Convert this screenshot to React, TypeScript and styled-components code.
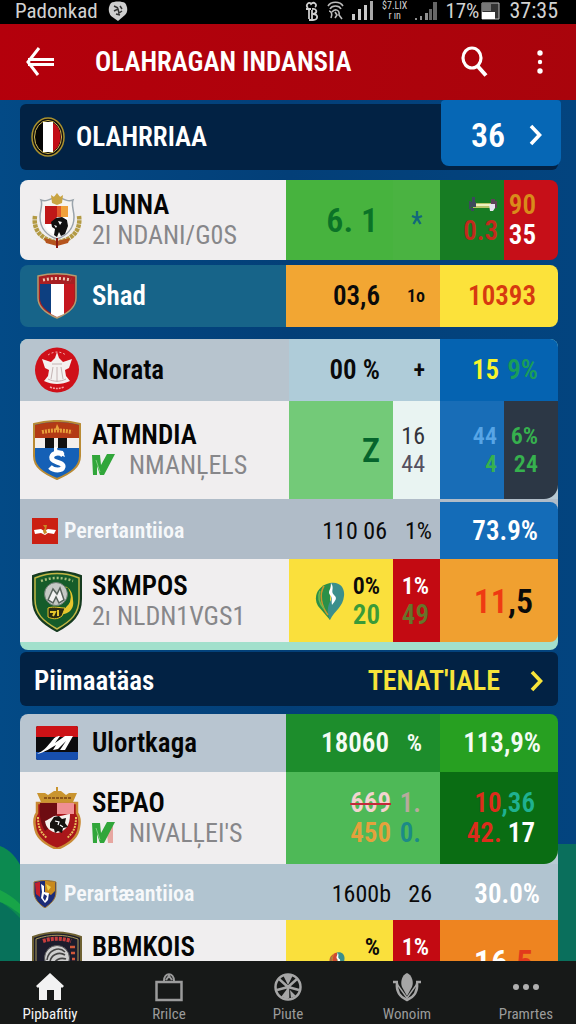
import React from 'react';
import styled, { createGlobalStyle, css } from 'styled-components';

const GlobalStyle = createGlobalStyle`
  *, *::before, *::after { box-sizing: border-box; }
  body {
    margin: 0;
    background: #03447f;
    font-family: 'Roboto Condensed', 'Liberation Sans Narrow', Roboto, 'Liberation Sans', sans-serif;
  }
  button { font: inherit; color: inherit; background: none; border: 0; padding: 0; cursor: pointer; }
  a { color: inherit; text-decoration: none; }
`;

const Shell = styled.div`
  position: relative;
  display: flex;
  flex-direction: column;
  height: 100vh;
  overflow: hidden;
  background: linear-gradient(90deg, #034a86, #033f78 50%, #03447f);
`;

const Backdrop = styled.svg`
  position: absolute;
  left: 0;
  bottom: 0;
  width: 100%;
  height: 184px;
`;

const StatusBar = styled.div`
  position: relative;
  flex: none;
  display: flex;
  align-items: center;
  justify-content: space-between;
  height: 24px;
  padding: 0 18px 2px 15px;
  background: #000;
  color: #d2d2d2;
  font-size: 21px;
  line-height: 22px;
`;

const StatusGroup = styled.div<{ $gap: number }>`
  display: flex;
  align-items: center;
  gap: ${(p) => p.$gap}px;
`;

const Clock = styled.span`
  font-size: 22px;
`;

const Carrier = styled.span`
  font-size: 10px;
  line-height: 10px;
  text-align: center;
`;

const AppBar = styled.header`
  position: relative;
  flex: none;
  display: flex;
  align-items: center;
  height: 76px;
  padding: 0 20px 0 24px;
  background: linear-gradient(100deg, #b4000c, #a9040c);
  color: #fff;
`;

const IconButton = styled.button`
  display: flex;
  align-items: center;
  justify-content: center;
  width: 32px;
  height: 40px;
`;

const Title = styled.h1`
  flex: 1;
  margin: 0 0 0 39px;
  font-size: 27px;
  line-height: 32px;
  font-weight: 600;
`;

const Actions = styled.div`
  display: flex;
  gap: 34px;
`;

const Content = styled.main`
  position: relative;
  flex: 1;
  min-height: 0;
  overflow-y: auto;
  scrollbar-width: none;
  padding: 0 18px 0 20px;
`;

const SectionBar = styled.section<{ $tall?: boolean }>`
  display: flex;
  align-items: center;
  justify-content: space-between;
  border-radius: 6px;
  background: #022244;
  color: #fff;
  ${(p) =>
    p.$tall
      ? css`
          height: 66px;
          margin-top: 4px;
          padding-left: 11px;
        `
      : css`
          height: 54px;
          margin: 2px 0 8px;
          padding: 4px 14px 0;
        `}
`;

const SectionTitle = styled.h2`
  display: flex;
  align-items: center;
  gap: 11px;
  margin: 0;
  font-size: 27px;
  line-height: 32px;
  font-weight: 600;
`;

const CountButton = styled.button`
  align-self: flex-start;
  display: flex;
  align-items: center;
  justify-content: space-between;
  width: 120px;
  height: 66px;
  margin: -4px -3px 0 0;
  padding: 4px 18px 0 30px;
  border-radius: 4px 4px 8px 8px;
  background: #0667b5;
  font-size: 34px;
  font-weight: 600;
`;

const MoreLink = styled.a`
  display: flex;
  align-items: center;
  gap: 30px;
  color: #f7e33a;
  font-size: 28px;
  line-height: 32px;
  font-weight: 600;
`;

const Table = styled.table<{ $top?: number; $foot?: string }>`
  display: block;
  margin-top: ${(p) => p.$top ?? 0}px;
  overflow: hidden;
  border-radius: 8px;
  background: ${(p) => p.$foot ?? 'transparent'};
  padding-bottom: ${(p) => (p.$foot ? 8 : 0)}px;
`;

const Body = styled.tbody`
  display: block;
`;

const Row = styled.tr<{ $h: number; $mid?: number; $inset?: boolean; $bg?: string }>`
  display: grid;
  grid-template-columns: minmax(0, 1fr) ${(p) => p.$mid ?? 107}px 47px 64px 54px;
  min-height: ${(p) => p.$h}px;
  padding-top: ${(p) => (p.$inset ? 3 : 0)}px;
  background: ${(p) => p.$bg ?? 'transparent'};
`;

const NameCell = styled.th<{ $bg: string; $small?: boolean }>`
  display: flex;
  align-items: center;
  gap: ${(p) => (p.$small ? 6 : 10)}px;
  padding: 0 0 0 12px;
  background: ${(p) => p.$bg};
  text-align: left;
  font-weight: 400;
`;

const Emblem = styled.span<{ $small?: boolean }>`
  display: flex;
  flex: none;
  justify-content: center;
  width: ${(p) => (p.$small ? 26 : 50)}px;
`;

const Name = styled.span<{ $color?: string; $size?: number }>`
  display: block;
  color: ${(p) => p.$color ?? '#050505'};
  font-size: ${(p) => p.$size ?? 27}px;
  line-height: 30px;
  font-weight: 600;
  white-space: nowrap;
`;

const Sub = styled.span`
  display: flex;
  align-items: center;
  gap: 14px;
  color: #87878a;
  font-size: 26px;
  line-height: 30px;
  white-space: nowrap;
`;

const Cell = styled.td<{ $bg: string; $pad?: number; $round?: string }>`
  display: flex;
  flex-direction: column;
  align-items: flex-end;
  justify-content: center;
  padding: 0 ${(p) => p.$pad ?? 13}px 0 0;
  background: ${(p) => p.$bg};
  border-radius: ${(p) => p.$round ?? '0'};
`;

const WideCell = styled(Cell)`
  grid-column: span 2;
`;

const Figure = styled.span<{ $color?: string; $size?: number; $light?: boolean }>`
  color: ${(p) => p.$color ?? '#0a0a0a'};
  font-size: ${(p) => p.$size ?? 27}px;
  line-height: ${(p) => (p.$size === 24 ? 28 : 30)}px;
  font-weight: ${(p) => (p.$light ? 400 : 600)};
  white-space: pre;
`;

const Struck = styled.s`
  text-decoration-color: #c22a3a;
  text-decoration-thickness: 2px;
`;

const Line = styled.span`
  display: flex;
  align-items: center;
  gap: 8px;
`;

const CellBody = styled.span`
  display: flex;
  align-items: center;
  gap: 8px;
`;

const Stack = styled.span`
  display: flex;
  flex-direction: column;
  align-items: flex-end;
`;

const BottomNav = styled.nav`
  position: relative;
  flex: none;
  display: flex;
  justify-content: space-between;
  height: 63px;
  padding: 11px 23px 0;
  background: #171918;
`;

const NavItem = styled.a<{ $active?: boolean }>`
  display: flex;
  flex-direction: column;
  align-items: center;
  gap: 2px;
  width: 54px;
  color: ${(p) => (p.$active ? '#f4f4f4' : '#9b9b9b')};
  font-size: 15px;
  line-height: 20px;
`;

/* ---------- icons ---------- */

const BackIcon = () => (
  <svg width="30" height="32" viewBox="0 0 30 32" fill="none" stroke="#fff" strokeWidth="3">
    <path d="M14 2 3 16l10 13M3 13.500h26M3 18.500h26" />
  </svg>
);

const SearchIcon = () => (
  <svg width="28" height="32" viewBox="0 0 28 32" fill="none" stroke="#fff" strokeWidth="3.200">
    <ellipse cx="12" cy="12" rx="9" ry="10" />
    <path d="m17.500 20 8.500 9.500" strokeWidth="4" />
  </svg>
);

const DotsIcon = () => (
  <svg width="8" height="26" viewBox="0 0 8 26" fill="#fff">
    <circle cx="4" cy="4" r="2.700" />
    <circle cx="4" cy="13" r="2.200" />
    <circle cx="4" cy="22" r="2.700" />
  </svg>
);

const Chevron = () => (
  <svg width="14" height="22" viewBox="0 0 14 22" fill="none" stroke="currentColor" strokeWidth="3.600">
    <path d="m2 2 8.500 9L2 20" />
  </svg>
);

const FaceIcon = () => (
  <svg width="20" height="20" viewBox="0 0 20 20">
    <path d="M3 2c3-2 11-2 14 0 3 4 3 9 0 12l-7 6-7-5C0 11 0 6 3 2Z" fill="#cfcfcf" />
    <path d="m6 5 4 2M12 5l2 3M6 10l4-2 1 4 3-2M8 13l4 1" stroke="#333" strokeWidth="1.500" fill="none" />
  </svg>
);

const SwirlIcon = () => (
  <svg width="15" height="20" viewBox="0 0 15 20" fill="none" stroke="#cfcfcf" strokeWidth="1.800">
    <path d="M4 7c-3-3 1-7 3-4 3-3 7 1 4 3M2 8h5M5 8v10M8 8c5-1 6 4 1 5 6 0 5 6 0 6H5M8 9v9" />
  </svg>
);

const AlarmIcon = () => (
  <svg width="17" height="20" viewBox="0 0 17 20" fill="none" stroke="#bdbdbd" strokeWidth="1.600">
    <path d="M1 5c3-5 12-5 15 0M3 8c2-4 9-4 11 0M5 11c3-4 8-2 7 3l3 4M2 10c2 0 4 3 2 7M8 11l2 3-2 3" />
  </svg>
);

const SignalIcon = ({ dim }: { dim?: boolean }) => (
  <svg width="22" height="20" viewBox="0 0 22 20">
    <path d={dim ? 'M0 17h2v2H0zM5 15h2v4H5zM10 12h3v7h-3z' : 'M0 13h3v6H0zM6 8h3v11H6zM12 4h3v15h-3z'} fill={dim ? '#8f8f8f' : '#c9c9c9'} />
    <path d={dim ? 'M14 8h3v11h-3zM18 1h4v18h-4z' : 'M18 0h3v19h-3z'} fill={dim ? '#666' : '#a9a9a9'} />
  </svg>
);

const BatteryIcon = () => (
  <svg width="20" height="18" viewBox="0 0 20 18">
    <path d="M1 1h17v16H1z" fill="#333" stroke="#bbb" strokeWidth="1" />
    <path d="M1 10h13v7H1z" fill="#fff" />
    <path d="M1 1h9v8H1z" fill="#777" />
  </svg>
);

const CheckMark = ({ accent }: { accent?: boolean }) => (
  <svg width="23" height="22" viewBox="0 0 23 22">
    {accent && <path d="m15 12 6-9v18h-5Z" fill="#e7a6a0" />}
    <path d="M0 1h8l1 10 6-11h8L12 21H8L5 12v9H1Z" fill="#31a63a" />
    <path d="m4 6 4 12" stroke="#7ccb7c" strokeWidth="1" />
  </svg>
);

const DumbbellIcon = () => (
  <svg width="30" height="22" viewBox="0 0 30 22">
    <path d="M5 9h19v5H5z" fill="#b6c36a" />
    <path d="M5 10h18v2H5z" fill="#eef0c0" />
    <path d="M1 7h2v8H1zM4 3h3v6H4zM3 8h5v5H3zM3 14h3v3H3z" fill="#3c4a5c" />
    <path d="M23 5h4v5h-4zM27 7h2v7h-2z" fill="#5a4454" />
    <path d="M21 10h6v4l-2 3h-3Z" fill="#e6e6ee" />
  </svg>
);

const StarIcon = () => (
  <svg width="12" height="20" viewBox="0 0 12 20" fill="none" stroke="#14687a" strokeWidth="2.400">
    <path d="M6 1v7M1 6l5 2 5-2M2.500 14 6 8l3.500 6" />
  </svg>
);

const LeafIcon = ({ red }: { red?: boolean }) => (
  <svg width={red ? 16 : 30} height={red ? 26 : 38} viewBox="0 0 30 38">
    <path d="M15 1C2 4-2 15 3 24l12 14V1Z" fill={red ? '#d04a32' : '#2b9048'} />
    <path d="M15 1c10-2 15 5 14 13-1 11-9 14-14 24-4-9-2-15 1-20Z" fill="#3b8f8c" />
    <path d="M9 4C4 12 6 24 13 33" stroke="#c9962c" strokeWidth="1.500" fill="none" />
    <path d="M5 9c-3 7 0 13 4 18" stroke="#6fb94c" strokeWidth="1.500" fill="none" />
    <path d="M16 1c4 6-1 8 3 12 4 3 1 6-2 10-1-5 1-7-2-10-3-4 2-6 1-12Z" fill="#fff" />
  </svg>
);

/* ---------- emblems ---------- */

const RoundTricolour = () => (
  <svg width="34" height="40" viewBox="0 0 34 40">
    <ellipse cx="17" cy="20" rx="16" ry="19" fill="#111" stroke="#a9912e" strokeWidth="1.500" />
    <ellipse cx="17" cy="20" rx="13.500" ry="16.500" fill="#050505" stroke="#d4bd55" strokeWidth="1" />
    <path d="M12 5h10v30H12z" fill="#fff" />
    <path d="M22 6c10 4 10 24 0 28Z" fill="#c20d16" />
  </svg>
);

const LaurelCrest = () => (
  <svg width="50" height="56" viewBox="0 0 50 56">
    <path d="M3 24c-2 14 6 23 20 26M47 24c2 14-6 23-20 26" fill="none" stroke="#b39a43" strokeWidth="4.500" strokeDasharray="3.500 0.700" />
    <path d="M9 8c5 2 10-1 16-4 6 3 11 6 16 4-2 5 1 10 1 17 0 12-8 19-17 22-9-3-17-10-17-22 0-7 3-12 1-17Z" fill="#f6f4f2" stroke="#9aa3ab" strokeWidth="1.500" />
    <path d="M13 14h12v18H13z" fill="#c01818" />
    <path d="M25 14h11v11H25z" fill="#f0a13a" />
    <path d="M25 14h4v11h-4z" fill="#e2582a" />
    <path d="M13 32h7l5-7h11c1 9-1 14-11 19-7-3-12-6-12-12Z" fill="#fff" />
    <path d="m19 30 5-4 6-1 5 3 1 6-3 8-4 2-2-4-2 5-3-2 1-6-3-2Z" fill="#101010" />
    <path d="m26 29 4 1-2 3ZM22 33l3 1-1 2Z" fill="#fff" />
    <path d="m19 3 3 2 3-4 3 4 3-2-1 8-5 2-5-2Z" fill="#c9a441" />
    <path d="m12 46 13 3 13-3-2 5-11 3-11-3Z" fill="#b5541d" />
    <path d="M24 46h2v10h-2z" fill="#8b1a12" />
  </svg>
);

const TricolourShield = () => (
  <svg width="40" height="46" viewBox="0 0 40 46">
    <path d="M1 3C14 0 26 0 39 3v22c0 9-7 15-19 20C8 40 1 34 1 25Z" fill="#a71f22" stroke="#b69a6e" strokeWidth="1.500" />
    <path d="M3 11h11v29C7 36 3 31 3 25Z" fill="#0d3f80" />
    <path d="M14 11h13v30l-7 3-6-3Z" fill="#fff" />
    <path d="M27 11h10v14c0 7-3 11-10 15Z" fill="#c5161e" />
    <path d="M6 7c9-2 19-2 28 0" stroke="#f0c9b4" strokeWidth="3" strokeDasharray="2 2" fill="none" />
  </svg>
);

const RedRound = () => (
  <svg width="44" height="46" viewBox="0 0 44 46">
    <ellipse cx="22" cy="23" rx="22" ry="22.500" fill="#cf1019" />
    <path d="M13 8c6-4 12-4 18 0" stroke="#f3a5a5" strokeWidth="1" strokeDasharray="2 2" fill="none" />
    <path d="m7 12 9 3 4-4 2-6 2 6 4 4 9-3-3 9-4 2 1 6 4 5c-8 4-18 4-26 0l4-5 1-6-4-2Z" fill="#f4f1f0" />
    <path d="M17 17h10M18 20l-2 12M22 20v15M26 20l2 12M13 32c6 3 12 3 18 0" stroke="#c4b4b4" strokeWidth="1" fill="none" />
    <path d="M15 40c5 2 9 2 14 0" stroke="#f3a5a5" strokeWidth="1.500" strokeDasharray="2 1" fill="none" />
  </svg>
);

const SwanShield = () => (
  <svg width="48" height="60" viewBox="0 0 48 60">
    <path d="M1 4c15-4 31-4 46 0v32c0 11-9 17-23 23C10 53 1 47 1 36Z" fill="#1560b6" stroke="#b98b35" strokeWidth="2" />
    <path d="M2 5c15-4 29-4 44 0v13H2Z" fill="#b33a15" />
    <path d="M9 12c10-2 20-2 30 0" stroke="#e8a03a" strokeWidth="4" strokeDasharray="2 1" fill="none" />
    <path d="m22 10 2-6 3 6Z" fill="#e8a03a" />
    <path d="M2 18h44v10H2z" fill="#f3efec" />
    <path d="M12 18h9v10h-9zM25 18h9v10h-9z" fill="#111" />
    <path d="M30 35c-5-4-13-1-11 4 2 4 12 3 11 8-1 4-9 4-13 0" fill="none" stroke="#fff" strokeWidth="5" />
    <path d="M21 27h3l1 7-4-1ZM24 30l6 1 2 6-5-2Z" fill="#fff" />
  </svg>
);

const RedFlag = () => (
  <svg width="26" height="26" viewBox="0 0 26 26">
    <path d="M0 0h26v26H0z" fill="#cb1f12" />
    <path d="m2 12 7-1 3 2 4-2 8 1-2 4-6-1-3 2-4-2-6 1Z" fill="#fff" />
    <path d="M11 7h4l-1 5 1 3-3 1-1-3 2-3Z" fill="#c98a25" />
  </svg>
);

const GreenShield = () => (
  <svg width="50" height="62" viewBox="0 0 50 62">
    <path d="M1 6C17 0 33 0 49 6v23c0 16-9 24-24 32C10 53 1 45 1 29Z" fill="#155c2a" stroke="#163a20" strokeWidth="2" />
    <path d="M3 8C18 2 32 2 47 8v21c0 15-8 22-22 30C11 51 3 44 3 29Z" fill="none" stroke="#c3b544" strokeWidth="1.500" />
    <path d="M9 11c11-4 21-4 32 0" stroke="#a8c07c" strokeWidth="2.500" strokeDasharray="2 2" fill="none" />
    <circle cx="24" cy="24" r="11.500" fill="#c5c9c6" stroke="#6a7a70" />
    <path d="m16 30 5-11 4 5 3-6 4 12-5 3-3-6-3 6Z" fill="#f2f2f2" stroke="#58635d" strokeWidth="1.500" />
    <path d="M33 16c8 7 8 24-13 29 13 1 23-3 21-15 0-7-3-12-8-14Z" fill="#e7c62c" />
    <path d="M35 18c4 7 4 12 0 17" stroke="#155c2a" strokeWidth="2" fill="none" />
    <path d="M16 38c6-2 12 0 17 0l-3 8c-5 4-10 3-14 1Z" fill="#2a2a12" stroke="#e7c62c" />
    <path d="M18 42h5l-2 4M26 40v6" stroke="#e7c62c" strokeWidth="2" fill="none" />
  </svg>
);

const StripedFlag = () => (
  <svg width="42" height="34" viewBox="0 0 42 34">
    <rect width="42" height="34" rx="2" fill="#0b0b0d" />
    <path d="M0 2q0-2 2-2h38q2 0 2 2v9H0Z" fill="#cc1216" />
    <path d="M0 26h42v6q0 2-2 2H2q-2 0-2-2Z" fill="#174fae" />
    <path d="M1 28c6-3 9-6 14-12 3-4 5-6 9-6l-5 7 10-7h8l-8 14h-5l6-9-8 8-5 1 3-5c-6 3-10 7-19 9Z" fill="#fff" />
  </svg>
);

const CrownShield = () => (
  <svg width="48" height="62" viewBox="0 0 48 62">
    <path d="M4 16h40v10c3 4 3 9 2 14-1 10-9 17-22 22C11 57 3 50 2 40 1 35 1 30 4 26Z" fill="#a9161a" stroke="#c98a35" strokeWidth="2.500" />
    <path d="M4 6h8l3 2 6-4h2V0h2v4h3l5 4 3-2h8l-4 9H8Z" fill="#c9942f" />
    <path d="M11 11h27" stroke="#8b5519" strokeWidth="2" strokeDasharray="3 1" />
    <path d="M7 16h17v20L12 44C7 36 6 26 7 16Z" fill="#6e0c12" />
    <path d="M24 16h17v11H24z" fill="#ef8f93" />
    <path d="M12 34c6-2 8-6 12-5s10-2 13-2c0 12-4 16-12 19-8-1-12-5-13-12Z" fill="#f6f1ee" />
    <path d="m17 36 4-6 5-1 3 3 4-1-1 5 3 4-5 1-1 5-4-2-3 2-1-4-4-1Z" fill="#16120f" />
    <path d="m22 34 4 1-1 3M27 38l3 2" stroke="#fff" strokeWidth="1.200" fill="none" />
    <path d="M5 30c0 11 3 16 9 21M43 30c0 11-3 16-9 21" stroke="#eac15c" strokeWidth="2" strokeDasharray="2 1" fill="none" />
  </svg>
);

const MiniShield = () => (
  <svg width="24" height="28" viewBox="0 0 24 28">
    <path d="M1 2c7-2 15-2 22 0v10c0 8-6 12-11 16C6 24 1 19 1 12Z" fill="#1c2c78" stroke="#a47a30" />
    <path d="M12 1c4 0 7 0 10 1v9l-4 4-6-3Z" fill="#c98a1d" />
    <path d="M2 3c2-1 4-1 5-1v15L3 14Z" fill="#c3202a" />
    <path d="m8 4 3 2v6l5 1-1 7-3 3-4-5 1-6Z" fill="#fff" />
    <path d="m11 14 3 2-2 5-2-3Z" fill="#1c2c78" />
    <path d="m13 4 5 3-3 4Z" fill="#f0cf4c" />
  </svg>
);

const BlackShield = () => (
  <svg width="50" height="62" viewBox="0 0 50 62">
    <path d="M1 6C17 0 33 0 49 6v23c0 16-9 24-24 32C10 53 1 45 1 29Z" fill="#1c1c2c" stroke="#6d6032" strokeWidth="2" />
    <path d="M4 8C18 3 32 3 46 8v21c0 14-8 21-21 28C12 50 4 43 4 29Z" fill="none" stroke="#a99a5a" />
    <path d="M11 10c9-3 19-3 28 0" stroke="#c63d3d" strokeWidth="4" strokeDasharray="3 1" fill="none" />
    <circle cx="25" cy="27" r="12.500" fill="#cfcfcf" stroke="#555" />
    <path d="M15 29c1-10 12-14 18-8M18 32c0-8 9-12 15-8M22 35c0-6 6-9 12-7M26 37c1-4 4-5 8-5" stroke="#444" strokeWidth="1.600" fill="none" />
    <path d="M38 16h5M39 22h4M40 28h3" stroke="#d2593a" strokeWidth="2.500" />
  </svg>
);

/* ---------- navigation icons ---------- */

const HomeIcon = () => (
  <svg width="30" height="30" viewBox="0 0 30 30" fill="#f2f2f2">
    <path d="m15 1 14 13-2 2-1-1v13h-7V18h-7v10H4V15l-1 1-2-2Z" />
  </svg>
);

const BagIcon = () => (
  <svg width="28" height="30" viewBox="0 0 28 30" fill="none" stroke="#9b9b9b" strokeWidth="2.500">
    <rect x="1.500" y="10" width="25" height="18" />
    <path d="M9 9c0-9 10-9 10 0M11 8l3-4 3 4" strokeWidth="2" />
  </svg>
);

const WheelIcon = () => (
  <svg width="28" height="30" viewBox="0 0 28 30">
    <circle cx="14" cy="15" r="12.500" fill="#171918" stroke="#a6a6a6" strokeWidth="2.500" />
    <path d="m14 15-9-8M14 15l9-8M14 15 3 18M14 15l11 3M14 15v11" stroke="#a6a6a6" strokeWidth="2.500" />
    <path d="M9 3h10l-5 10ZM7 25l6-8 1 10ZM22 24l-6-6 1 8Z" fill="#a6a6a6" />
  </svg>
);

const BudIcon = () => (
  <svg width="28" height="30" viewBox="0 0 28 30">
    <path d="M14 1c5 2 7 9 5 14l-5 9-5-9C7 10 9 3 14 1Z" fill="#a6a6a6" />
    <path d="M0 10h5M23 10h5M4 11c-1 9 3 14 10 17 7-3 11-8 10-17" fill="none" stroke="#a6a6a6" strokeWidth="2.500" />
    <path d="m4 12 10 14 10-14" fill="none" stroke="#a6a6a6" strokeWidth="1.500" />
  </svg>
);

const MoreIcon = () => (
  <svg width="28" height="30" viewBox="0 0 28 30" fill="#b0b0b0">
    <circle cx="4" cy="15" r="3" />
    <circle cx="14" cy="15" r="3" />
    <circle cx="24" cy="15" r="3" />
  </svg>
);

const NAV = [
  { label: 'Pipbafitiy', icon: <HomeIcon />, active: true },
  { label: 'Rrilce', icon: <BagIcon /> },
  { label: 'Piute', icon: <WheelIcon /> },
  { label: 'Wonoim', icon: <BudIcon /> },
  { label: 'Pramrtes', icon: <MoreIcon /> },
];

const PALE = '#f0eeef';

export default function App() {
  return (
    <>
      <GlobalStyle />
      <Shell>
        <Backdrop viewBox="0 0 576 184" preserveAspectRatio="none" aria-hidden="true">
          <path d="M0 6C10 10 16 16 24 32v152H0Z" fill="#0c8a50" />
          <path d="M0 62c8 4 14 10 24 20v102H0Z" fill="#07715a" />
          <path d="M0 50c8 4 14 8 20 14v10C12 68 6 64 0 62Z" fill="#18a548" />
          <path d="M550 4h26v180h-26Z" fill="#0a6f5c" />
        </Backdrop>

        <StatusBar>
          <StatusGroup $gap={10}>
            <span>Padonkad</span>
            <FaceIcon />
          </StatusGroup>
          <StatusGroup $gap={8}>
            <SwirlIcon />
            <AlarmIcon />
            <SignalIcon />
            <Carrier>$7.LIX<br />r ın</Carrier>
            <SignalIcon dim />
            <StatusGroup $gap={2}>
              <span>17%</span>
              <BatteryIcon />
            </StatusGroup>
            <Clock>37:35</Clock>
          </StatusGroup>
        </StatusBar>

        <AppBar>
          <IconButton aria-label="Back"><BackIcon /></IconButton>
          <Title>OLAHRAGAN INDANSIA</Title>
          <Actions>
            <IconButton aria-label="Search"><SearchIcon /></IconButton>
            <IconButton aria-label="Menu"><DotsIcon /></IconButton>
          </Actions>
        </AppBar>

        <Content>
          <SectionBar $tall>
            <SectionTitle><RoundTricolour />OLAHRRIAA</SectionTitle>
            <CountButton>36<Chevron /></CountButton>
          </SectionBar>

          <Table $top={10}>
            <Body>
              <Row $h={80}>
                <NameCell scope="row" $bg={PALE}>
                  <Emblem><LaurelCrest /></Emblem>
                  <span><Name>LUNNA</Name><Sub>2I NDANI/G0S</Sub></span>
                </NameCell>
                <Cell $bg="#47b33e" $pad={15}><Figure $size={34} $color="#0b7327">6. 1</Figure></Cell>
                <Cell $bg="#4ab341" $pad={17}><StarIcon /></Cell>
                <Cell $bg="#177c23" $pad={6}><DumbbellIcon /><Figure $color="#c22a1c">0.3</Figure></Cell>
                <Cell $bg="#c60f18" $pad={22}>
                  <Figure $color="#d98a1b">90</Figure>
                  <Figure $color="#fff">35</Figure>
                </Cell>
              </Row>
            </Body>
          </Table>

          <Table $top={5}>
            <Body>
              <Row $h={62}>
                <NameCell scope="row" $bg="#176489">
                  <Emblem><TricolourShield /></Emblem>
                  <Name $color="#fff">Shad</Name>
                </NameCell>
                <Cell $bg="#f2a633"><Figure>03,6</Figure></Cell>
                <Cell $bg="#f2a633" $pad={15}><Figure $size={18}>1o</Figure></Cell>
                <WideCell $bg="#fce23a" $pad={22}><Figure $color="#d63a10">10393</Figure></WideCell>
              </Row>
            </Body>
          </Table>

          <Table $top={12} $foot="#a2e0cc">
            <Body>
              <Row $h={62} $mid={104}>
                <NameCell scope="row" $bg="#b7c4ce">
                  <Emblem><RedRound /></Emblem>
                  <Name>Norata</Name>
                </NameCell>
                <Cell $bg="#afccd9"><Figure>00 %</Figure></Cell>
                <Cell $bg="#afccd9" $pad={15}><Figure $size={24}>+</Figure></Cell>
                <WideCell $bg="#0563b1" $pad={20}>
                  <Line><Figure $color="#f8f52c">15</Figure><Figure $color="#1a9d59">9%</Figure></Line>
                </WideCell>
              </Row>
              <Row $h={98} $mid={104} $bg="#b7c9d3">
                <NameCell scope="row" $bg={PALE}>
                  <Emblem><SwanShield /></Emblem>
                  <span><Name>ATMNDIA</Name><Sub><CheckMark />NMANĻELS</Sub></span>
                </NameCell>
                <Cell $bg="#73ca78"><Figure $size={34} $color="#05642c">Z</Figure></Cell>
                <Cell $bg="#e9f4f2" $pad={15}>
                  <Figure $size={24} $light $color="#33333b">16</Figure>
                  <Figure $size={24} $light $color="#55505f">44</Figure>
                </Cell>
                <Cell $bg="#186db7" $pad={7}>
                  <Figure $size={24} $color="#57a5e6">44</Figure>
                  <Figure $size={24} $color="#36b14e">4</Figure>
                </Cell>
                <Cell $bg="#2c3745" $pad={20} $round="0 0 14px 0">
                  <Figure $size={24} $color="#36b14e">6%</Figure>
                  <Figure $size={24} $color="#36b14e">24</Figure>
                </Cell>
              </Row>
              <Row $h={60} $inset $bg="#b0bcc8">
                <NameCell scope="row" $bg="#b0bcc8" $small>
                  <Emblem $small><RedFlag /></Emblem>
                  <Name $color="#f6f8fa" $size={22}>Perertaıntiioa</Name>
                </NameCell>
                <Cell $bg="#b0bcc8" $pad={6}><Figure $size={24} $light>110 06</Figure></Cell>
                <Cell $bg="#b0bcc8" $pad={8}><Figure $size={24} $light>1%</Figure></Cell>
                <WideCell $bg="#146cb8" $pad={20} $round="0 8px 0 0"><Figure $color="#fff">73.9%</Figure></WideCell>
              </Row>
              <Row $h={83} $mid={104}>
                <NameCell scope="row" $bg={PALE}>
                  <Emblem><GreenShield /></Emblem>
                  <span><Name>SKMPOS</Name><Sub>2ı NLDN1VGS1</Sub></span>
                </NameCell>
                <Cell $bg="#fae03c">
                  <CellBody>
                    <LeafIcon />
                    <Stack><Figure $size={24}>0%</Figure><Figure $color="#3a9b38">20</Figure></Stack>
                  </CellBody>
                </Cell>
                <Cell $bg="#c30a12" $pad={11}>
                  <Figure $size={24} $color="#fff">1%</Figure>
                  <Figure $color="#68742a">49</Figure>
                </Cell>
                <WideCell $bg="#f0a030" $pad={25} $round="0 0 8px 0">
                  <Figure $size={34}><Figure as="span" $size={34} $color="#ef3a12">11</Figure>,5</Figure>
                </WideCell>
              </Row>
            </Body>
          </Table>

          <SectionBar>
            <SectionTitle>Piimaatäas</SectionTitle>
            <MoreLink href="#tenatiale">TENAT'IALE<Chevron /></MoreLink>
          </SectionBar>

          <Table>
            <Body>
              <Row $h={58}>
                <NameCell scope="row" $bg="#b8c5d0">
                  <Emblem><StripedFlag /></Emblem>
                  <Name>Ulortkaga</Name>
                </NameCell>
                <Cell $bg="#1d8d2c" $pad={4}><Figure $color="#f4fbf4">18060</Figure></Cell>
                <Cell $bg="#1d8d2c" $pad={18}><Figure $size={24} $color="#f4fbf4">%</Figure></Cell>
                <WideCell $bg="#27a021" $pad={17}><Figure $color="#f4fbf4">113,9%</Figure></WideCell>
              </Row>
              <Row $h={92} $bg="#b7cad4">
                <NameCell scope="row" $bg={PALE}>
                  <Emblem><CrownShield /></Emblem>
                  <span><Name>SEPAO</Name><Sub><CheckMark accent />NIVALĻEI'S</Sub></span>
                </NameCell>
                <Cell $bg="#4eb957" $pad={2}>
                  <Figure $color="#f3d3cf"><Struck>669</Struck></Figure>
                  <Figure $color="#e5a13c">450</Figure>
                </Cell>
                <Cell $bg="#4eb957" $pad={19}>
                  <Figure $color="#b8aa9c">1.</Figure>
                  <Figure $color="#1c8b86">0.</Figure>
                </Cell>
                <WideCell $bg="#0a6d13" $pad={23} $round="0 0 14px 0">
                  <Figure $color="#1fb190"><Figure as="span" $color="#dd2c1c">10</Figure>,36</Figure>
                  <Figure $color="#fff"><Figure as="span" $color="#dd2c1c">42.</Figure> 17</Figure>
                </WideCell>
              </Row>
              <Row $h={56} $inset $bg="#b1c4d0">
                <NameCell scope="row" $bg="#b1c4d0" $small>
                  <Emblem $small><MiniShield /></Emblem>
                  <Name $color="#f6f8fa" $size={22}>Perartæantiioa</Name>
                </NameCell>
                <Cell $bg="#b1c4d0" $pad={2}><Figure $size={24} $light>1600b</Figure></Cell>
                <Cell $bg="#b1c4d0" $pad={8}><Figure $size={24} $light>26</Figure></Cell>
                <WideCell $bg="#b1c4d0" $pad={18}><Figure $color="#fff">30.0%</Figure></WideCell>
              </Row>
              <Row $h={83}>
                <NameCell scope="row" $bg={PALE}>
                  <Emblem><BlackShield /></Emblem>
                  <span><Name>BBMKOIS</Name><Sub>2ı NLDN1VGS1</Sub></span>
                </NameCell>
                <Cell $bg="#fae03c">
                  <CellBody>
                    <LeafIcon red />
                    <Stack><Figure $size={24}>%</Figure><Figure $color="#3a9b38">20</Figure></Stack>
                  </CellBody>
                </Cell>
                <Cell $bg="#c30a12" $pad={11}>
                  <Figure $size={24} $color="#fff">1%</Figure>
                  <Figure $color="#68742a">49</Figure>
                </Cell>
                <WideCell $bg="#ee8420" $pad={25}>
                  <Figure $size={34} $color="#fff">16 <Figure as="span" $size={34} $color="#e23a1c">5</Figure></Figure>
                </WideCell>
              </Row>
            </Body>
          </Table>
        </Content>

        <BottomNav>
          {NAV.map((item) => (
            <NavItem key={item.label} href={`#${item.label}`} $active={item.active}>
              {item.icon}
              <span>{item.label}</span>
            </NavItem>
          ))}
        </BottomNav>
      </Shell>
    </>
  );
}
